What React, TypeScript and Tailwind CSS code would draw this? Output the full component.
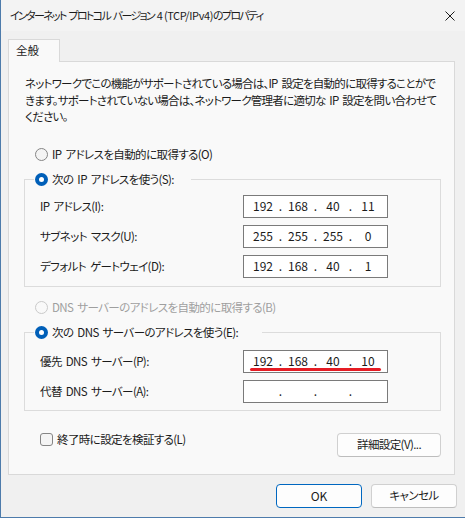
import React from 'react';

type Octets = [string, string, string, string];

const Radio: React.FC<{ checked?: boolean; disabled?: boolean }> = ({ checked, disabled }) => {
  if (checked) {
    return (
      <span className="w-[13px] h-[13px] rounded-full bg-[#005fb8] flex items-center justify-center shrink-0">
        <span className="w-[5px] h-[5px] rounded-full bg-white" />
      </span>
    );
  }
  return (
    <span
      className={
        disabled
          ? 'w-[13px] h-[13px] rounded-full border border-[#cacaca] bg-[#f9f9f9] shrink-0'
          : 'w-[13px] h-[13px] rounded-full border border-[#858585] bg-[#f4f4f4] shrink-0'
      }
    />
  );
};

const IpBox: React.FC<{ value: Octets; marked?: boolean }> = ({ value, marked }) => (
  <div className="relative w-[145px] h-[23px] border border-[#7a7a7a] bg-white flex items-center pl-[5px] text-[12px] tracking-normal">
    {value.map((octet, idx) => (
      <React.Fragment key={idx}>
        <span className="w-[28px] text-center">{octet}</span>
        {idx < 3 && <span className="w-[7px] text-center">.</span>}
      </React.Fragment>
    ))}
    {marked && <div className="absolute left-[6px] top-[17px] w-[131px] h-[3px] rounded-full bg-[#e51c24]" />}
  </div>
);

const Field: React.FC<{ label: string; value: Octets; marked?: boolean }> = ({ label, value, marked }) => (
  <>
    <span className="leading-[17px]">{label}</span>
    <IpBox value={value} marked={marked} />
  </>
);

const Group: React.FC<{ title: string; legendWidth: string; pt: string; pb: string; children: React.ReactNode }> = ({
  title,
  legendWidth,
  pt,
  pb,
  children,
}) => (
  <fieldset className={`ml-[15px] w-[417px] border border-[#dcdcdc] pl-[9px] ${pb}`}>
    <legend className={`${legendWidth} h-[17px] flex items-center gap-[4px] pl-[1px]`}>
      <Radio checked />
      <span className="leading-[17px] whitespace-nowrap">{title}</span>
    </legend>
    <div className={`grid grid-cols-[203px_145px] gap-y-[7px] items-center pl-[6px] ${pt}`}>{children}</div>
  </fieldset>
);

const Button: React.FC<{ label: string; primary?: boolean; className?: string }> = ({ label, primary, className }) => (
  <button
    className={`h-[24px] rounded-[4px] bg-[#fdfdfd] flex items-center justify-center ${
      primary ? 'border border-[#0067c0]' : 'border border-[#d0d0d0] border-b-[#bdbdbd]'
    } ${className ?? ''}`}
  >
    {label}
  </button>
);

export default function App() {
  return (
    <div className="w-[465px] h-[518px] flex flex-col bg-[#f0f0f0] border-l border-b border-[#4d7bab] text-[11.5px] tracking-[-0.6px] [word-spacing:2px] text-[#1b1b1b] font-['Noto_Sans_CJK_JP',sans-serif] [font-feature-settings:'palt']">
      <div className="h-[31px] bg-[#f3f3f3] flex items-center justify-between pl-[9px] pr-[10px] shrink-0">
        <span className="leading-[17px] whitespace-nowrap text-[11px] tracking-[-1.7px]">
          インターネット プロトコル バージョン 4 <span className="tracking-[-0.4px]">(TCP/IPv4)</span>のプロパティ
        </span>
        <svg width="10" height="10" viewBox="0 0 10 10" className="text-[#1b1b1b]">
          <path d="M0.5 0.5 L9.5 9.5 M9.5 0.5 L0.5 9.5" stroke="currentColor" strokeWidth="1" fill="none" />
        </svg>
      </div>

      <div className="pt-[8px] pl-[7px] shrink-0">
        <div className="relative z-10 -mb-px w-[52px] h-[23px] border border-b-0 border-[#d9d9d9] bg-[#f9f9f9] pl-[7px] flex items-center tracking-normal">
          全般
        </div>
      </div>

      <div className="ml-[7px] w-[447px] h-[414px] border border-[#d9d9d9] bg-[#f9f9f9] flex flex-col shrink-0">
        <p className="ml-[16px] pt-[13px] leading-[16.5px] whitespace-nowrap tracking-[-0.75px]">
          ネットワークでこの機能がサポートされている場合は、IP 設定を自動的に取得することがで
          <br />
          きます。サポートされていない場合は、ネットワーク管理者に適切な IP 設定を問い合わせて
          <br />
          ください。
        </p>

        <label className="ml-[26px] mt-[21px] h-[17px] flex items-center gap-[4px]">
          <Radio />
          <span className="leading-[17px]">IP アドレスを自動的に取得する(O)</span>
        </label>

        <div className="mt-[8px]">
          <Group title="次の IP アドレスを使う(S):" legendWidth="w-[157px]" pt="pt-[7px]" pb="pb-[8px]">
            <Field label="IP アドレス(I):" value={['192', '168', '40', '11']} />
            <Field label="サブネット マスク(U):" value={['255', '255', '255', '0']} />
            <Field label="デフォルト ゲートウェイ(D):" value={['192', '168', '40', '1']} />
          </Group>
        </div>

        <label className="ml-[26px] mt-[12px] h-[17px] flex items-center gap-[4px] text-[#9f9f9f]">
          <Radio disabled />
          <span className="leading-[17px]">DNS サーバーのアドレスを自動的に取得する(B)</span>
        </label>

        <div className="mt-[8px]">
          <Group title="次の DNS サーバーのアドレスを使う(E):" legendWidth="w-[228px]" pt="pt-[9px]" pb="pb-[7px]">
            <Field label="優先 DNS サーバー(P):" value={['192', '168', '40', '10']} marked />
            <Field label="代替 DNS サーバー(A):" value={['', '', '', '']} />
          </Group>
        </div>

        <div className="mt-[20px] ml-[31px] mr-[13px] flex items-start justify-between">
          <label className="h-[17px] flex items-center gap-[4px]">
            <span className="w-[13px] h-[13px] rounded-[3px] border border-[#858585] bg-[#f4f4f4]" />
            <span className="leading-[17px]">終了時に設定を検証する(L)</span>
          </label>
          <Button label="詳細設定(V)..." className="mt-[2px] w-[104px]" />
        </div>
      </div>

      <div className="mt-[9px] pr-[8px] flex justify-end gap-[9px]">
        <Button label="OK" primary className="w-[86px] text-[12px] tracking-normal" />
        <Button label="キャンセル" className="w-[86px]" />
      </div>
    </div>
  );
}
